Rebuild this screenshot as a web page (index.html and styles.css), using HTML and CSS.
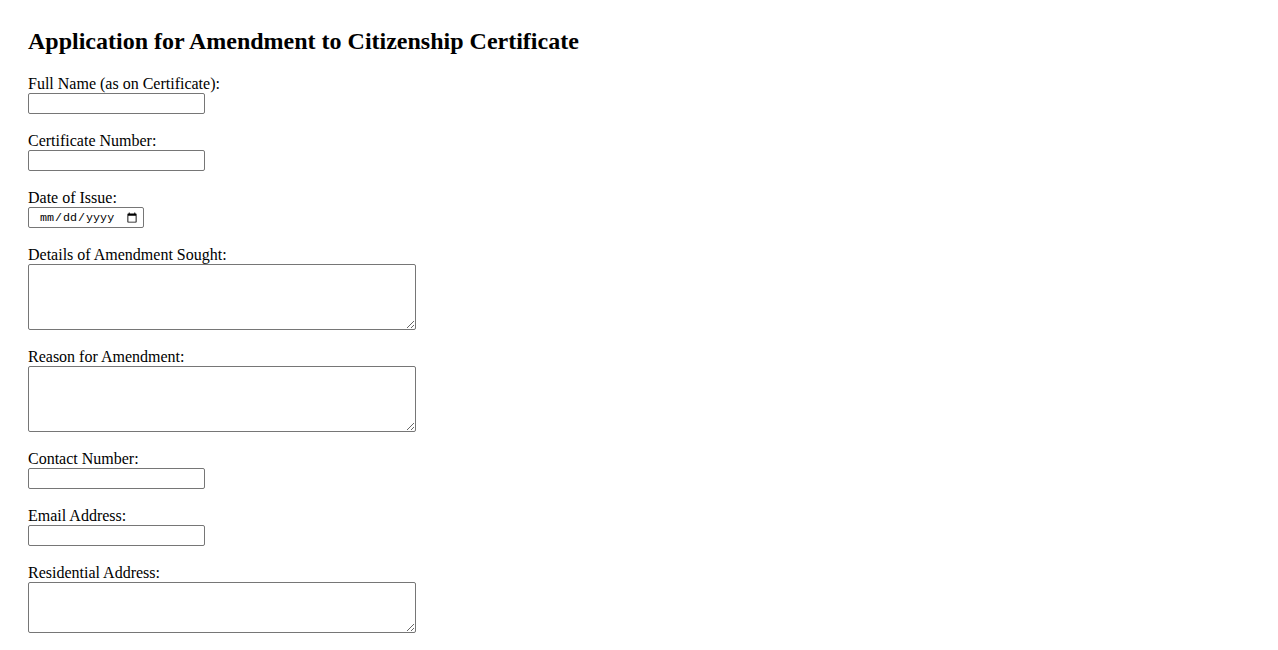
FILE: index.html
```html
<!DOCTYPE html>
<html lang="en">
<head>
<meta charset="utf-8">
<title>Application for Amendment to Citizenship Certificate</title>
<link rel="stylesheet" href="styles.css">
</head>
<body>
<div class="page">
  <h2 class="title">Application for Amendment to Citizenship Certificate</h2>
  <form class="form">
    <div class="field">
      <label class="label" for="fullname">Full Name (as on Certificate):</label>
      <input class="text-input" type="text" id="fullname" name="fullname">
    </div>
    <div class="field">
      <label class="label" for="certno">Certificate Number:</label>
      <input class="text-input" type="text" id="certno" name="certno">
    </div>
    <div class="field">
      <label class="label" for="issue">Date of Issue:</label>
      <input class="date-input" type="date" id="issue" name="issue">
    </div>
    <div class="field">
      <label class="label" for="details">Details of Amendment Sought:</label>
      <textarea class="area area-4" id="details" name="details"></textarea>
    </div>
    <div class="field">
      <label class="label" for="reason">Reason for Amendment:</label>
      <textarea class="area area-4" id="reason" name="reason"></textarea>
    </div>
    <div class="field">
      <label class="label" for="contact">Contact Number:</label>
      <input class="text-input" type="tel" id="contact" name="contact">
    </div>
    <div class="field">
      <label class="label" for="email">Email Address:</label>
      <input class="text-input" type="email" id="email" name="email">
    </div>
    <div class="field">
      <label class="label" for="address">Residential Address:</label>
      <textarea class="area area-3" id="address" name="address"></textarea>
    </div>
  </form>
</div>
</body>
</html>
```

FILE: styles.css
```css
html, body {
  margin: 0;
  padding: 0;
  background: #ffffff;
}

body {
  font-family: "Liberation Serif", "Times New Roman", serif;
  font-size: 16px;
  color: #000000;
}

.page {
  padding: 28px;
}

.title {
  margin: 0 0 20px;
  font-size: 24px;
  line-height: 27px;
  font-weight: bold;
}

.form {
  display: flex;
  flex-direction: column;
  align-items: flex-start;
}

.field {
  display: flex;
  flex-direction: column;
  align-items: flex-start;
  margin-bottom: 18px;
}

.label {
  display: block;
  line-height: 18px;
  height: 18px;
}

.text-input,
.date-input,
.area {
  box-sizing: border-box;
  margin: 0;
  border: 1px solid #767676;
  border-radius: 2px;
  background: #ffffff;
}

.text-input {
  width: 177px;
  height: 21px;
  padding: 1px 2px;
  font-family: "Liberation Sans", Arial, sans-serif;
  font-size: 13.33px;
}

.date-input {
  width: 116px;
  height: 21px;
  padding: 1px 3px 1px 10px;
  font-family: "Liberation Mono", "Courier New", monospace;
  font-size: 11.7px;
}

.area {
  width: 388px;
  padding: 2px;
  resize: both;
  font-family: "Liberation Mono", "Courier New", monospace;
  font-size: 13.33px;
}

.area-4 {
  height: 66px;
}

.area-3 {
  height: 51px;
}
```
